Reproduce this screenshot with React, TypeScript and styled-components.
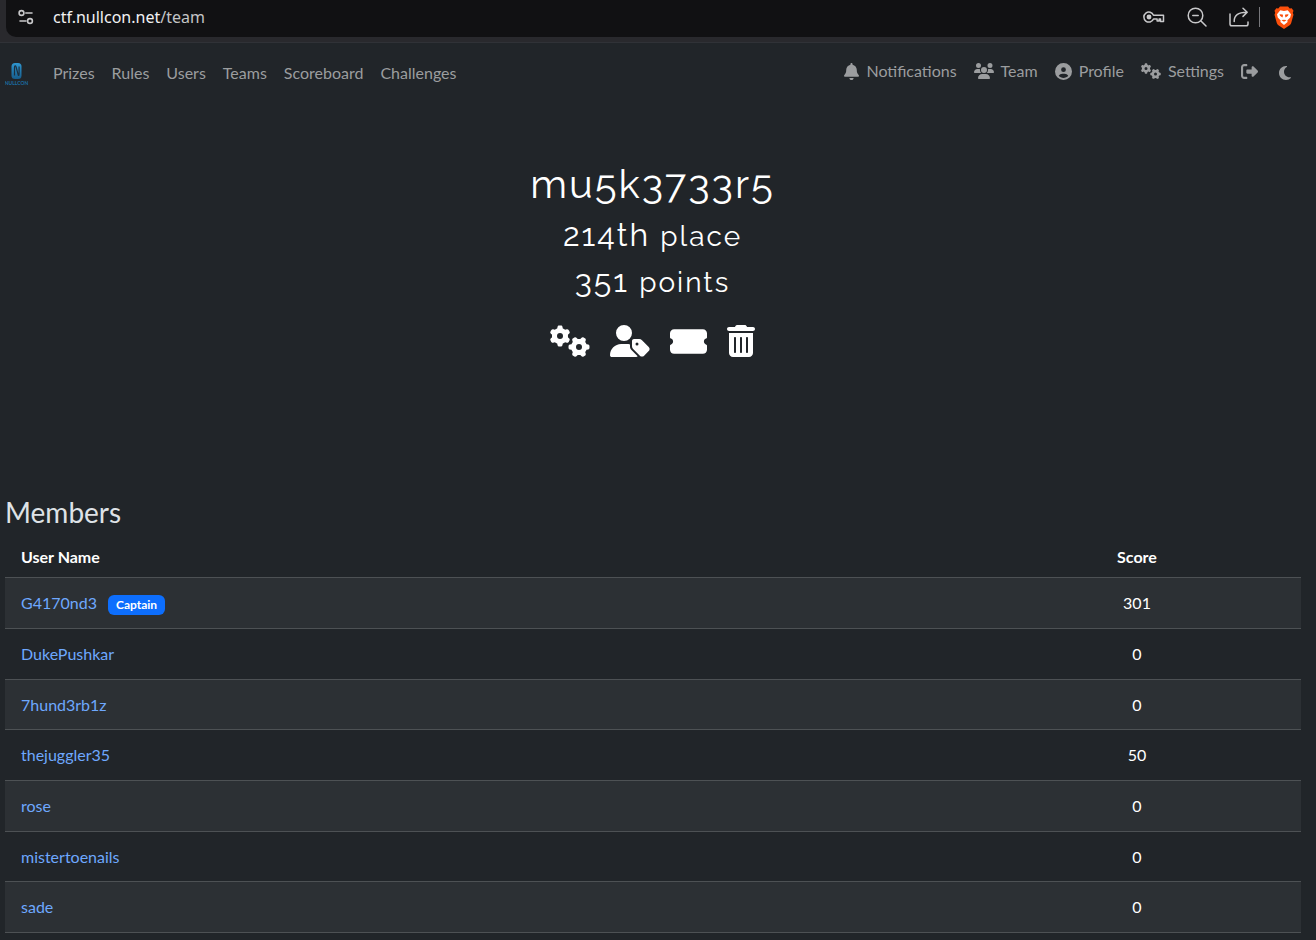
import React from "react";
import styled, { createGlobalStyle } from "styled-components";
import {
  FaBell,
  FaUsers,
  FaCircleUser,
  FaGears,
  FaRightFromBracket,
  FaMoon,
  FaUserTag,
  FaTicketSimple,
  FaTrashCan,
} from "react-icons/fa6";

const GlobalStyle = createGlobalStyle`
  *, *::before, *::after { box-sizing: border-box; }
  html { background: #212529; }
  body {
    margin: 0;
    background: #212529;
    color: #dee2e6;
    font-family: Lato, "Open Sans", sans-serif;
    font-size: 16px;
    line-height: 24px;
  }
  h1, h2, h3 { margin: 0; font-weight: 400; }
`;

const BrowserBar = styled.header`
  background: #29292d;
  border-bottom: 1px solid #303237;
  padding: 0 0 5px 6px;
`;

const AddressBar = styled.div`
  display: flex;
  align-items: center;
  height: 37px;
  padding: 0 22px 3px 11px;
  background: #111113;
  border-radius: 0 0 0 10px;
  color: #c8c8ca;
`;

const Address = styled.div`
  flex: 1;
  margin-left: 18px;
  color: #c4c4c6;
  font-family: "Noto Sans", sans-serif;
  font-size: 16px;
  span { color: #f2f2f3; }
`;

const BarButton = styled.button<{ $gap?: number }>`
  display: flex;
  margin: 0 0 0 ${(p) => p.$gap ?? 0}px;
  padding: 0;
  border: 0;
  background: none;
  color: inherit;
`;

const Divider = styled.span`
  width: 1px;
  height: 20px;
  margin-left: 10px;
  background: #77777b;
`;

const Navbar = styled.nav`
  display: flex;
  align-items: center;
  justify-content: space-between;
  height: 56px;
  padding: 0 23px 0 5px;
`;

const NavGroup = styled.div<{ $right?: boolean }>`
  display: flex;
  align-items: center;
  gap: 17px;
  padding: ${(p) => (p.$right ? "0" : "4px 0 0")};
`;

const Brand = styled.a`
  display: flex;
  margin-right: 8px;
`;

const NavLink = styled.a`
  display: flex;
  align-items: center;
  gap: 7px;
  color: #9b9d9f;
  text-decoration: none;
  svg { display: block; }
`;

const BellIcon = styled(FaBell)`
  width: 15px;
`;

const ThemeButton = styled.button`
  display: flex;
  margin: 4px 0 0 2px;
  padding: 0;
  border: 0;
  background: none;
  color: #9b9d9f;
`;

const Hero = styled.section`
  display: flex;
  flex-direction: column;
  align-items: center;
  padding: 61px 11px 134px 0;
  color: #fff;
  font-family: Raleway, "Open Sans", sans-serif;
  letter-spacing: 2px;
  text-align: center;
`;

const TeamName = styled.h1`
  font-size: 40px;
  line-height: 48px;
`;

const Standing = styled.h2`
  margin-top: 8px;
  font-size: 32px;
  line-height: 38px;
  small {
    font-size: 28px;
    line-height: 28px;
  }
`;

const Actions = styled.div`
  display: flex;
  align-items: center;
  gap: 20px;
  margin-top: 21px;
`;

const ActionButton = styled.button<{ $narrow?: boolean }>`
  display: flex;
  padding: 0;
  border: 0;
  background: none;
  color: #fff;
  svg { ${(p) => p.$narrow && "width: 28px;"} }
`;

const Members = styled.section`
  padding: 0 15px 0 5px;
`;

const SectionTitle = styled.h3`
  font-size: 28px;
  line-height: 34px;
  margin-bottom: 8px;
`;

const Table = styled.table`
  width: 100%;
  border-collapse: separate;
  border-spacing: 0;
  table-layout: fixed;
  color: #fff;
`;

const HeadCell = styled.th<{ $score?: boolean }>`
  width: ${(p) => (p.$score ? "328px" : "auto")};
  height: 41px;
  padding: 0 16px;
  border-bottom: 1px solid #4d5154;
  font-weight: 700;
  text-align: ${(p) => (p.$score ? "center" : "left")};
`;

const Row = styled.tr`
  height: 51px;
  &:nth-child(3n) { height: 50px; }
  &:nth-child(odd) { background: #2c3034; }
`;

const Cell = styled.td<{ $score?: boolean }>`
  padding: 0 16px;
  border-bottom: 1px solid #4d5154;
  text-align: ${(p) => (p.$score ? "center" : "left")};
`;

const UserLink = styled.a`
  color: #6ea8fe;
  text-decoration: none;
`;

const Badge = styled.span`
  display: inline-block;
  margin-left: 11px;
  padding: 4px 8px;
  border-radius: 6px;
  background: #0d6efd;
  font-size: 12px;
  font-weight: 700;
  line-height: 12px;
`;

const leftLinks = ["Prizes", "Rules", "Users", "Teams", "Scoreboard", "Challenges"];

const rightLinks = [
  { label: "Notifications", icon: <BellIcon size={17} /> },
  { label: "Team", icon: <FaUsers size={20} /> },
  { label: "Profile", icon: <FaCircleUser size={17} /> },
  { label: "Settings", icon: <FaGears size={20} /> },
];

const members = [
  { name: "G4170nd3", score: 301, captain: true },
  { name: "DukePushkar", score: 0 },
  { name: "7hund3rb1z", score: 0 },
  { name: "thejuggler35", score: 50 },
  { name: "rose", score: 0 },
  { name: "mistertoenails", score: 0 },
  { name: "sade", score: 0 },
];

const stroke = { fill: "none", stroke: "currentColor", strokeLinecap: "round", strokeLinejoin: "round" } as const;

const TuneIcon = () => (
  <svg width="18" height="18" viewBox="0 0 18 18" {...stroke} strokeWidth="1.6">
    <circle cx="4.5" cy="5" r="2.4" />
    <path d="M8.8 5H15M3 13h6" />
    <circle cx="13" cy="13" r="2.4" />
  </svg>
);

const KeyIcon = () => (
  <svg width="22" height="14" viewBox="0 0 22 14" {...stroke} strokeWidth="1.5">
    <path d="M10.5 5.2A5 5 0 1 0 10.5 9h3.6v2h2V9h1.4v2.6h3V5.2Z" />
    <circle cx="6" cy="7" r="1.7" fill="currentColor" />
  </svg>
);

const ZoomOutIcon = () => (
  <svg width="20" height="20" viewBox="0 0 20 20" {...stroke} strokeWidth="1.5">
    <circle cx="8.5" cy="8.5" r="7.3" />
    <path d="M14 14l5 5M5.8 8.5h5.4" />
  </svg>
);

const ShareIcon = () => (
  <svg width="20" height="20" viewBox="0 0 20 20" {...stroke} strokeWidth="1.5">
    <path d="M1 7v10a1.8 1.8 0 0 0 1.8 1.8h14.4A1.8 1.8 0 0 0 19 17v-2" />
    <path d="M5.2 14.5C5 8.5 9 5.3 17.6 5.3M14 1.2l4.2 4.1L14 9.4" />
  </svg>
);

const BraveIcon = () => (
  <svg width="20" height="23" viewBox="0 0 20 23">
    <path fill="#fb4f0b" d="M6 .5h8l1.7 2 2-.2 1.8 2.5-.7 2 .7 2-2.3 8.1c-.3 1-.8 1.7-1.6 2.3L10 23l-5.600-3.800c-.8-.6-1.300-1.300-1.600-2.300L.5 8.800l.7-2-.7-2 1.800-2.500 2 .2z" />
    <path fill="#fff" d="M6.300 4.300 10 5l3.700-.7 3.300 4-.8 3.200-2.900 3.100.3 1.500L10 19l-3.600-2.900.3-1.500-2.900-3.100L3 8.300z" />
    <path fill="#fb4f0b" d="m5.500 8.200 3.200.4.300 1.200-.6 1.700L6 9.800zM14.500 8.200l-3.200.4-.3 1.200.6 1.700L14 9.800zM7.500 14.300l2.500-.8 2.500.8-2.500 1.400z" />
    <path fill="#fff" d="M9.300 8h1.400l.4 5L10 14l-1.100-1z" />
  </svg>
);

const BrandMark = () => (
  <svg width="23" height="24" viewBox="0 0 23 24" role="img" aria-label="Nullcon">
    <defs>
      <linearGradient id="brand" x1="0" y1="0" x2="0" y2="1">
        <stop offset="0" stopColor="#2f96cf" />
        <stop offset="1" stopColor="#175d8c" />
      </linearGradient>
    </defs>
    <rect x="6.5" y="2" width="10" height="16" rx="3.5" fill="url(#brand)" />
    <path d="M9.500 14.500V6.500c0-2 1-2 1.600-.5l2 7.500c.4 1.500 1 1 1-.5V5.500" fill="none" stroke="#1d3040" strokeWidth="1.2" />
    <text x="11.500" y="23.500" fill="#1b6da3" fontFamily="Lato, sans-serif" fontSize="5" fontWeight="700" textAnchor="middle">NULLCON</text>
  </svg>
);

export default function App() {
  return (
    <>
      <GlobalStyle />
      <BrowserBar>
        <AddressBar>
          <BarButton aria-label="Site settings"><TuneIcon /></BarButton>
          <Address><span>ctf.nullcon.net</span>/team</Address>
          <BarButton aria-label="Passwords"><KeyIcon /></BarButton>
          <BarButton aria-label="Zoom out" $gap={22}><ZoomOutIcon /></BarButton>
          <BarButton aria-label="Share" $gap={22}><ShareIcon /></BarButton>
          <Divider />
          <BarButton aria-label="Brave Shields" $gap={14}><BraveIcon /></BarButton>
        </AddressBar>
      </BrowserBar>
      <Navbar>
        <NavGroup>
          <Brand href="#"><BrandMark /></Brand>
          {leftLinks.map((label) => (
            <NavLink href="#" key={label}>{label}</NavLink>
          ))}
        </NavGroup>
        <NavGroup $right>
          {rightLinks.map(({ label, icon }) => (
            <NavLink href="#" key={label}>{icon}{label}</NavLink>
          ))}
          <NavLink href="#" aria-label="Logout"><FaRightFromBracket size={17} /></NavLink>
          <ThemeButton aria-label="Toggle theme"><FaMoon size={16} /></ThemeButton>
        </NavGroup>
      </Navbar>
      <main>
        <Hero>
          <TeamName>mu5k3733r5</TeamName>
          <Standing>214th <small>place</small></Standing>
          <Standing>351 <small>points</small></Standing>
          <Actions>
            <ActionButton aria-label="Edit team"><FaGears size={40} /></ActionButton>
            <ActionButton aria-label="Choose captain"><FaUserTag size={40} /></ActionButton>
            <ActionButton aria-label="Invite members"><FaTicketSimple size={37} /></ActionButton>
            <ActionButton aria-label="Disband team" $narrow><FaTrashCan size={32} /></ActionButton>
          </Actions>
        </Hero>
        <Members>
          <SectionTitle>Members</SectionTitle>
          <Table>
            <thead>
              <tr>
                <HeadCell scope="col">User Name</HeadCell>
                <HeadCell scope="col" $score>Score</HeadCell>
              </tr>
            </thead>
            <tbody>
              {members.map((m) => (
                <Row key={m.name}>
                  <Cell>
                    <UserLink href="#">{m.name}</UserLink>
                    {m.captain && <Badge>Captain</Badge>}
                  </Cell>
                  <Cell $score>{m.score}</Cell>
                </Row>
              ))}
            </tbody>
          </Table>
        </Members>
      </main>
    </>
  );
}
